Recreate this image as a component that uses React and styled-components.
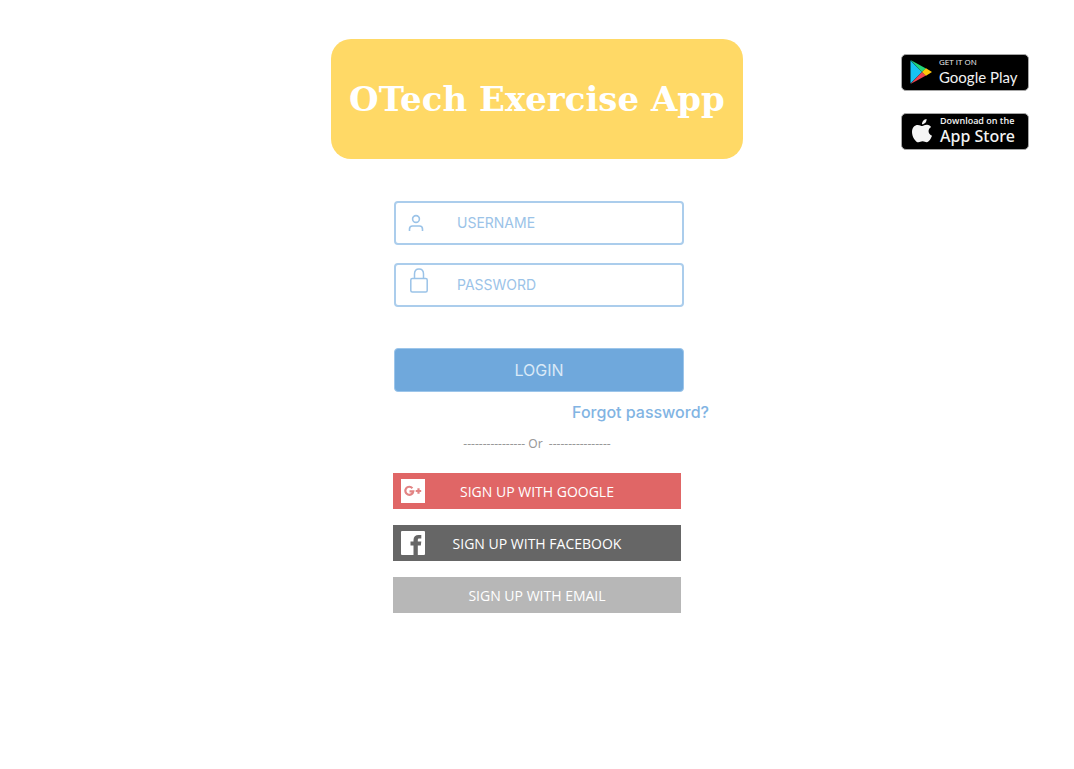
import React from "react";
import styled, { createGlobalStyle } from "styled-components";

const GlobalStyle = createGlobalStyle`
  *, *::before, *::after { box-sizing: border-box; }
  body {
    margin: 0;
    background: #ffffff;
    font-family: "Open Sans", "Noto Sans", sans-serif;
  }
`;

const Page = styled.div`
  min-height: 100vh;
`;

const Header = styled.header`
  display: grid;
  grid-template-columns: 1fr auto 1fr;
  align-items: start;
  padding-top: 39px;
`;

const Banner = styled.h1`
  grid-column: 2;
  margin: 0;
  padding: 0 18px;
  border-radius: 20px;
  background: #ffd966;
  color: #ffffff;
  font: bold 34px/120px "DejaVu Serif", serif;
  text-align: center;
  white-space: nowrap;
`;

const Stores = styled.nav`
  justify-self: end;
  display: grid;
  gap: 22px;
  padding: 15px 45px 0 0;
`;

const StoreBadge = styled.a`
  display: flex;
  align-items: center;
  gap: ${(p) => p.$gap}px;
  width: 128px;
  height: 37px;
  padding: 0 0 2px 8px;
  border: 1px solid #a6a6a6;
  border-radius: 5px;
  background: #000000;
  color: #f2f2f2;
  text-decoration: none;
  white-space: nowrap;

  svg { flex: none; }
`;

const BadgeText = styled.span`
  display: grid;
`;

const BadgeSmall = styled.span`
  font: ${(p) => (p.$wide ? "600 9px/11px" : "8px/11px")} "Open Sans", sans-serif;
`;

const BadgeName = styled.span`
  font: ${(p) => (p.$google ? 'bold 15px/20px "Lato"' : '600 16px/20px "Noto Sans"')}, sans-serif;
  font-weight: ${(p) => (p.$google ? 400 : 500)};
`;

const Main = styled.main`
  display: flex;
  flex-direction: column;
  align-items: center;
  padding: 42px 0 40px;
`;

const LoginForm = styled.form`
  display: flex;
  flex-direction: column;
  align-items: center;
  width: 344px;
  max-width: 100%;
  padding-left: 4px;
`;

const Field = styled.label`
  display: flex;
  align-items: center;
  width: 290px;
  height: 44px;
  margin-bottom: 18px;
  padding-left: 12px;
  border: 2px solid #abcdec;
  border-radius: 4px;
`;

const FieldIcon = styled.span`
  display: flex;
  align-items: ${(p) => (p.$raised ? "flex-start" : "center")};
  justify-content: ${(p) => (p.$raised ? "flex-end" : "flex-start")};
  width: 20px;
  height: 34px;
  margin-right: 29px;
`;

const Input = styled.input`
  flex: 1;
  min-width: 0;
  padding: 0;
  border: 0;
  outline: 0;
  background: transparent;
  color: #6fa8dc;
  font: 14px/20px "Inter", sans-serif;

  &::placeholder { color: #9bc3e8; opacity: 1; }
`;

const LoginButton = styled.button`
  width: 290px;
  height: 44px;
  margin-top: 23px;
  border: 1px solid #9cc5ea;
  border-radius: 4px;
  background: #6fa8dc;
  color: #d9e9f7;
  font: 16px/20px "Inter", sans-serif;
  cursor: pointer;
`;

const ForgotLink = styled.a`
  align-self: flex-end;
  margin-top: 10px;
  color: #82b4e3;
  font: 500 16px/20px "Inter", sans-serif;
  text-decoration: none;
`;

const Divider = styled.p`
  margin: 12px 0 19px;
  color: #999999;
  font: 12px/20px "Noto Sans", sans-serif;
  white-space: pre;
`;

const SocialList = styled.div`
  display: grid;
  gap: 16px;
  width: 288px;
`;

const SocialButton = styled.button`
  display: grid;
  grid-template-columns: 24px 1fr 24px;
  align-items: center;
  height: 36px;
  padding: 0 8px;
  border: 0;
  background: ${(p) => p.$color};
  color: #ffffff;
  font: 14px/20px "Open Sans", sans-serif;
  cursor: pointer;

  svg { display: block; }
`;

const SocialLabel = styled.span`
  grid-column: 2;
  padding-top: 2px;
  white-space: nowrap;
`;

const UserIcon = () => (
  <svg width="16" height="18" viewBox="0 0 16 18" fill="none" stroke="#9bc3e8" strokeWidth="1.6" aria-hidden="true">
    <circle cx="8" cy="5" r="3.4" />
    <path d="M1.5 17V15Q1.5 12 4.5 12H11.500Q14.500 12 14.500 15V17" />
  </svg>
);

const LockIcon = () => (
  <svg width="18" height="25" viewBox="0 0 18 25" fill="none" stroke="#9bc3e8" strokeWidth="1.5" aria-hidden="true">
    <rect x="0.8" y="10.500" width="16.400" height="13.500" rx="1.5" />
    <path d="M4.500 10.500V6Q4.500 1 9 1T13.500 6V10.500" />
  </svg>
);

const PlayIcon = () => (
  <svg width="22" height="26" viewBox="0 0 22 26" aria-hidden="true">
    <path d="M0.500 1.500L12 13L0.500 24.500Z" fill="#16c4f2" />
    <path d="M0.500 1L16 9.500L12 13Z" fill="#22d67a" />
    <path d="M0.500 25L16 16.500L12 13Z" fill="#f04351" />
    <path d="M16 9.200L22 13L16 16.800L12 13Z" fill="#ffc60a" />
  </svg>
);

const AppleIcon = () => (
  <svg width="22" height="24" viewBox="-2 0 22 24" fill="#f5f5f5" aria-hidden="true">
    <path d="M14.600 0C14.800 2.900 12.500 5.400 10 5.300C9.800 2.700 12 0.300 14.600 0Z" />
    <path d="M10.300 7C11.500 7 12.800 5.700 15 5.800C17 5.900 18.400 6.900 19.100 8.100C15.300 10.400 16 15.300 20 16.800C19.100 19.300 16.900 23.300 14.800 23.300C13.200 23.300 12.500 22.300 10.600 22.300C8.700 22.300 7.900 23.300 6.500 23.300C3.600 23.300 0 17.700 0 12.900C0 8.500 2.800 5.900 5.700 5.900C7.700 5.900 9 7 10.300 7Z" />
  </svg>
);

const GooglePlusIcon = () => (
  <svg width="24" height="24" viewBox="0 0 24 24" fill="none" aria-hidden="true">
    <rect width="24" height="24" fill="#ffffff" />
    <path d="M11.400 9.200A4 4 0 1 0 12.300 12.300H8.500M14.700 12H20.200M17.500 9.300V14.700" stroke="#e28484" strokeWidth="2.200" />
  </svg>
);

const FacebookIcon = () => (
  <svg width="24" height="24" viewBox="0 0 24 24" aria-hidden="true">
    <rect width="24" height="24" rx="1" fill="#ffffff" />
    <path d="M12.500 24V14.500H9.500V10.500H12.500V9C12.500 5.700 14.500 4 17.500 4H20.300V7.500H18.300C17 7.500 16.800 8 16.800 9.200V10.500H20.300L19.800 14.500H16.800V24Z" fill="#666666" />
  </svg>
);

export default function App() {
  return (
    <Page>
      <GlobalStyle />
      <Header>
        <Banner>OTech Exercise App</Banner>
        <Stores aria-label="App downloads">
          <StoreBadge href="#google-play" $gap={7}>
            <PlayIcon />
            <BadgeText>
              <BadgeSmall>GET IT ON</BadgeSmall>
              <BadgeName $google>Google Play</BadgeName>
            </BadgeText>
          </StoreBadge>
          <StoreBadge href="#app-store" $gap={8}>
            <AppleIcon />
            <BadgeText>
              <BadgeSmall $wide>Download on the</BadgeSmall>
              <BadgeName>App Store</BadgeName>
            </BadgeText>
          </StoreBadge>
        </Stores>
      </Header>
      <Main>
        <LoginForm onSubmit={(event) => event.preventDefault()}>
          <Field>
            <FieldIcon><UserIcon /></FieldIcon>
            <Input type="text" placeholder="USERNAME" aria-label="Username" autoComplete="username" />
          </Field>
          <Field>
            <FieldIcon $raised><LockIcon /></FieldIcon>
            <Input type="password" placeholder="PASSWORD" aria-label="Password" autoComplete="current-password" />
          </Field>
          <LoginButton type="submit">LOGIN</LoginButton>
          <ForgotLink href="#forgot">Forgot password?</ForgotLink>
        </LoginForm>
        <Divider>{"---------------- Or  ----------------"}</Divider>
        <SocialList>
          <SocialButton type="button" $color="#e06666">
            <GooglePlusIcon />
            <SocialLabel>SIGN UP WITH GOOGLE</SocialLabel>
          </SocialButton>
          <SocialButton type="button" $color="#666666">
            <FacebookIcon />
            <SocialLabel>SIGN UP WITH FACEBOOK</SocialLabel>
          </SocialButton>
          <SocialButton type="button" $color="#b7b7b7">
            <SocialLabel>SIGN UP WITH EMAIL</SocialLabel>
          </SocialButton>
        </SocialList>
      </Main>
    </Page>
  );
}
